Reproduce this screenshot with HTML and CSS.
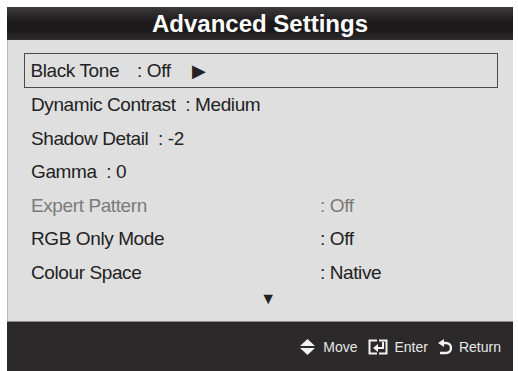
FILE: index.html
```html
<!DOCTYPE html>
<html>
<head>
    <meta charset="UTF-8">
    <title>Advanced Settings</title>
    <link rel="stylesheet" href="styles.css">
</head>
<body>
    <div class="screen">
        <div class="header">Advanced Settings</div>

        <div class="panel">
            <div class="row selected">
                <span>Black Tone</span>
                <span class="sep">: Off</span>
                <span class="arrow-right">&#9654;</span>
            </div>
            <div class="row">Dynamic Contrast&nbsp;&nbsp;: Medium</div>
            <div class="row">Shadow Detail&nbsp;&nbsp;: -2</div>
            <div class="row">Gamma&nbsp;&nbsp;: 0</div>
            <div class="row cols disabled">
                <span class="label">Expert Pattern</span>
                <span class="value">: Off</span>
            </div>
            <div class="row cols">
                <span class="label">RGB Only Mode</span>
                <span class="value">: Off</span>
            </div>
            <div class="row cols">
                <span class="label">Colour Space</span>
                <span class="value">: Native</span>
            </div>
            <div class="more">&#9660;</div>
        </div>

        <div class="footer">
            <div class="hint">
                <svg width="17" height="18" viewBox="0 0 17 18">
                    <polygon points="8.5,1 16,8 1,8" fill="#f2f2f2"/>
                    <polygon points="1,10 16,10 8.5,17" fill="#f2f2f2"/>
                </svg>
                <span>Move</span>
            </div>
            <div class="hint">
                <svg width="20" height="16" viewBox="0 0 20 16">
                    <path d="M9 1.5 H1.5 V14.5 H9" fill="none" stroke="#f2f2f2" stroke-width="2"/>
                    <path d="M11 1.5 H18.5 V14.5 H11" fill="none" stroke="#f2f2f2" stroke-width="2"/>
                    <path d="M15 3 V9 H8" fill="none" stroke="#f2f2f2" stroke-width="2"/>
                    <polygon points="5,9 10,5 10,13" fill="#f2f2f2"/>
                </svg>
                <span>Enter</span>
            </div>
            <div class="hint">
                <svg width="14" height="16" viewBox="0 0 14 16">
                    <path d="M5 4 H8 A5 5 0 0 1 8 14 H2" fill="none" stroke="#f2f2f2" stroke-width="2.4"/>
                    <polygon points="0,4 6,0 6,8" fill="#f2f2f2"/>
                </svg>
                <span>Return</span>
            </div>
        </div>
    </div>
</body>
</html>
```

FILE: styles.css
```css
body {
    margin: 0;
    padding: 0;
    background: #ffffff;
    font-family: 'Liberation Sans', Arial, sans-serif;
}

.screen {
    width: 506px;
    height: 364px;
    margin: 7px 0 0 7px;
    display: flex;
    flex-direction: column;
}

.header {
    height: 33px;
    background: linear-gradient(180deg, #3c3a3b 0%, #1c1a1b 45%, #1a1819 70%, #2e2c2d 100%);
    color: #ffffff;
    font-size: 24px;
    font-weight: bold;
    text-align: center;
    line-height: 33px;
}

.panel {
    height: 281px;
    box-sizing: border-box;
    background: #dfdfdf;
    border-left: 1px solid #b8b8b8;
    padding: 13px 15px 0 16px;
    color: #222222;
    font-size: 19px;
    letter-spacing: -0.4px;
}

.row {
    height: 33.5px;
    line-height: 33.5px;
    padding-left: 7px;
    white-space: nowrap;
}

.row.selected {
    height: 35px;
    line-height: 33px;
    box-sizing: border-box;
    border: 1.5px solid #4a4a4a;
    padding-left: 5.5px;
}

.sep {
    margin-left: 13px;
}

.arrow-right {
    margin-left: 17px;
    font-size: 18px;
}

.row.cols {
    display: flex;
}

.row.cols .label {
    width: 289px;
}

.row.disabled {
    color: #7a7a7a;
}

.more {
    height: 18px;
    line-height: 18px;
    margin-top: 1px;
    text-align: center;
    padding-left: 14px;
    font-size: 16px;
}

.footer {
    flex: 1;
    background: #2c292a;
    border-top: 1px solid #8a8a8a;
    display: flex;
    justify-content: flex-end;
    align-items: center;
    gap: 10px;
    padding: 0 12px 0 0;
    color: #e8e8e8;
    font-size: 14px;
}

.hint {
    display: flex;
    align-items: center;
    gap: 7px;
}
```
